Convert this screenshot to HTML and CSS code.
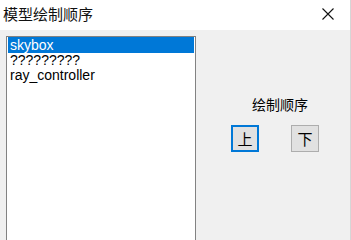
FILE: index.html
```html
<!DOCTYPE html>
<html>
<head>
<meta charset="utf-8">
<link rel="stylesheet" href="styles.css">
</head>
<body>
<div class="window">
  <div class="titlebar">
    <span class="title">模型绘制顺序</span>
    <span class="close">
      <svg width="12" height="12" viewBox="0 0 12 12"><path d="M0.5 0.5 L11.5 11.5 M11.5 0.5 L0.5 11.5" stroke="#111" stroke-width="1.1" fill="none"/></svg>
    </span>
  </div>
  <div class="client">
    <div class="listbox">
      <div class="item selected">skybox</div>
      <div class="item">?????????</div>
      <div class="item">ray_controller</div>
    </div>
    <div class="panel">
      <div class="label">绘制顺序</div>
      <div class="buttons">
        <button class="btn default">上</button>
        <button class="btn">下</button>
      </div>
    </div>
  </div>
</div>
</body>
</html>
```
FILE: styles.css
```css
html, body {
  margin: 0;
  padding: 0;
}
body {
  width: 351px;
  overflow: hidden;
  background: #f0f0f0;
  font-family: "Liberation Sans", "Noto Sans CJK SC", sans-serif;
}
.window {
  width: 351px;
  height: 100vh;
  min-height: 228px;
  display: flex;
  flex-direction: column;
  box-sizing: border-box;
  border-right: 1px solid #d6d6d6;
  overflow: hidden;
}
.titlebar {
  height: 30px;
  background: #ffffff;
  display: flex;
  align-items: center;
  justify-content: space-between;
  flex: none;
}
.title {
  font-family: "Noto Sans CJK SC", sans-serif;
  font-size: 15px;
  line-height: 30px;
  color: #111;
  padding-left: 3px;
  position: relative;
  top: -1px;
}
.close {
  width: 12px;
  height: 12px;
  margin-right: 16px;
  margin-top: -3px;
  display: flex;
}
.client {
  flex: 1;
  display: flex;
  background: #f0f0f0;
  min-height: 0;
}
.listbox {
  margin-left: 6px;
  margin-top: 6px;
  width: 190px;
  height: 400px;
  box-sizing: border-box;
  border: 1px solid #828282;
  background: #fff;
  padding: 0 1px;
  flex: none;
}
.item {
  font-size: 14px;
  line-height: 15px;
  height: 15px;
  padding-left: 2px;
  color: #000;
  white-space: nowrap;
}
.item.selected {
  background: #0078d7;
  color: #fff;
  height: 16px;
  line-height: 16px;
}
.panel {
  display: flex;
  flex-direction: column;
  align-items: flex-start;
  padding-left: 35px;
  padding-top: 65px;
}
.label {
  font-family: "Noto Sans CJK SC", sans-serif;
  font-size: 14px;
  line-height: 18px;
  color: #000;
  margin-left: 21px;
}
.buttons {
  display: flex;
  gap: 32px;
  margin-top: 12px;
}
.btn {
  width: 28px;
  height: 27px;
  box-sizing: border-box;
  background: #e1e1e1;
  border: 1px solid #adadad;
  padding: 0;
  margin: 0;
  font-family: "Noto Sans CJK SC", sans-serif;
  font-size: 15px;
  line-height: 20px;
  color: #000;
  display: flex;
  align-items: center;
  justify-content: center;
}
.btn.default {
  border: 2px solid #0078d7;
}
```
